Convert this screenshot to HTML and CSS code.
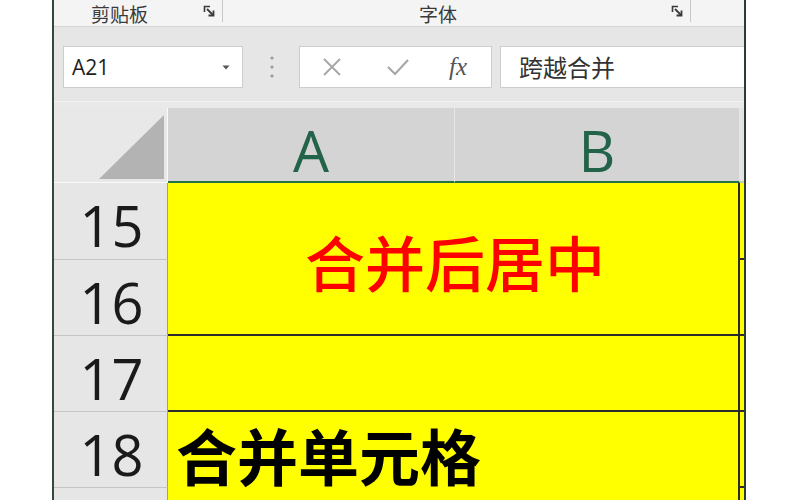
FILE: index.html
```html
<!DOCTYPE html>
<html lang="zh-CN">
<head>
<meta charset="utf-8">
<title>合并单元格</title>
<link rel="stylesheet" href="styles.css">
</head>
<body>
<div class="window">
  <div class="ribbon">
    <div class="group g1">
      <span class="glabel">剪贴板</span>
      <svg class="launcher" width="12" height="12" viewBox="0 0 12 12"><path d="M1.5 7V1.5H7" fill="none" stroke="#3a3a3a" stroke-width="1.6"/><path d="M4 4L10 10" stroke="#3a3a3a" stroke-width="1.8"/><path d="M10.5 5.5V10.5H5.5" fill="none" stroke="#3a3a3a" stroke-width="1.8"/></svg>
    </div>
    <div class="group g2">
      <span class="glabel">字体</span>
      <svg class="launcher" width="12" height="12" viewBox="0 0 12 12"><path d="M1.5 7V1.5H7" fill="none" stroke="#3a3a3a" stroke-width="1.6"/><path d="M4 4L10 10" stroke="#3a3a3a" stroke-width="1.8"/><path d="M10.5 5.5V10.5H5.5" fill="none" stroke="#3a3a3a" stroke-width="1.8"/></svg>
    </div>
  </div>
  <div class="fbar">
    <div class="namebox">
      <span class="nbtext">A21</span>
      <svg class="dd" width="8" height="5" viewBox="0 0 8 5"><path d="M0.5 0.5H7.5L4 4.5Z" fill="#555"/></svg>
    </div>
    <div class="grip">
      <svg width="4" height="24" viewBox="0 0 4 24"><circle cx="2" cy="3" r="1.6" fill="#9a9a9a"/><circle cx="2" cy="12" r="1.6" fill="#9a9a9a"/><circle cx="2" cy="21" r="1.6" fill="#9a9a9a"/></svg>
    </div>
    <div class="fbtns">
      <svg class="fx-x" width="20" height="20" viewBox="0 0 20 20"><path d="M2 2L18 18M18 2L2 18" stroke="#a8a8a8" stroke-width="2"/></svg>
      <svg class="fx-ok" width="24" height="20" viewBox="0 0 24 20"><path d="M2 10L9 17L22 3" fill="none" stroke="#a8a8a8" stroke-width="2.2"/></svg>
      <span class="fx">fx</span>
    </div>
    <div class="finput">跨越合并</div>
  </div>
  <div class="sheetwrap">
    <div class="sheet">
      <div class="corner">
        <svg width="113" height="74" viewBox="0 0 113 74"><polygon points="45,71 110,71 110,7" fill="#b3b3b3"/></svg>
      </div>
      <div class="colh">A</div>
      <div class="colh">B</div>
      <div class="colh colc"></div>

      <div class="rowh r15">15</div>
      <div class="rowh r16">16</div>
      <div class="rowh r17">17</div>
      <div class="rowh r18">18</div>
      <div class="rowh r19"></div>

      <div class="cell m1">合并后居中</div>
      <div class="cell m2"></div>
      <div class="cell m3">合并单元格</div>

      <div class="cc c15"></div>
      <div class="cc c16"></div>
      <div class="cc c17"></div>
      <div class="cc c18"></div>
      <div class="cc c19"></div>
    </div>
  </div>
</div>
</body>
</html>
```

FILE: styles.css
```css
* { box-sizing: border-box; }
html, body {
  margin: 0;
  padding: 0;
  width: 800px;
  height: 500px;
  overflow: hidden;
  background: #ffffff;
  font-family: "Noto Sans CJK SC", "Noto Sans", sans-serif;
}
.window {
  margin-left: 52px;
  width: 694px;
  height: 500px;
  border-left: 2px solid #34493a;
  border-right: 2px solid #2f3a33;
  background: #e6e6e6;
  display: flex;
  flex-direction: column;
  overflow: hidden;
}

/* ribbon group labels */
.ribbon {
  height: 27px;
  flex: none;
  background: #f4f4f4;
  border-bottom: 1px solid #d4d4d4;
  display: flex;
}
.group {
  display: flex;
  align-items: flex-start;
  height: 22px;
  border-right: 1px solid #c8c8c8;
  padding-right: 7px;
}
.g1 { width: 169px; padding-left: 37px; }
.g2 { width: 468px; padding-left: 196px; }
.glabel {
  font-size: 19px;
  line-height: normal;
  color: #3a3a3a;
}
.launcher { margin-left: auto; margin-top: 5px; }

/* formula bar */
.fbar {
  height: 74px;
  flex: none;
  display: flex;
  align-items: flex-start;
  padding-top: 19px;
  padding-left: 9px;
  background: #e6e6e6;
}
.namebox {
  width: 180px;
  height: 42px;
  background: #ffffff;
  border: 1px solid #cdcdcd;
  display: flex;
  align-items: center;
  padding-left: 8px;
  padding-right: 12px;
}
.nbtext {
  font-family: "Open Sans", "Liberation Sans", sans-serif;
  font-size: 21px;
  color: #1e1e1e;
}
.dd { margin-left: auto; }
.grip {
  width: 56px;
  height: 42px;
  display: flex;
  align-items: center;
  justify-content: center;
  padding-left: 1px;
}
.fbtns {
  width: 193px;
  height: 42px;
  background: #ffffff;
  border: 1px solid #cdcdcd;
  display: flex;
  align-items: center;
  padding-left: 22px;
}
.fx-ok { margin-left: 44px; }
.fx {
  margin-left: 39px;
  font-family: "Liberation Serif", "DejaVu Serif", serif;
  font-style: italic;
  font-size: 25px;
  color: #555555;
}
.finput {
  margin-left: 8px;
  flex: 1;
  height: 42px;
  background: #ffffff;
  border: 1px solid #cdcdcd;
  border-right: none;
  padding-left: 18px;
  font-size: 24px;
  line-height: 40px;
  color: #333333;
}

/* sheet */
.sheetwrap {
  flex: 1;
  border-top: 1px solid #f2f2f2;
  padding-top: 6px;
  background: #e9e9e9;
}
.sheet {
  display: grid;
  grid-template-columns: 114px 287px 285px 1fr;
  grid-template-rows: 75px 77px 76px 76px 76px 60px;
  height: 400px;
}
.corner {
  background: #e8e8e8;
  border-right: 1px solid #fafafa;
  border-bottom: 1px solid #fafafa;
}
.corner svg { display: block; }
.colh {
  background: #d4d4d4;
  border-right: 1px solid #e6e6e6;
  border-bottom: 2px solid #217346;
  display: flex;
  justify-content: center;
  align-items: center;
  padding-top: 10px;
  font-family: "Open Sans", "Liberation Sans", sans-serif;
  font-size: 57px;
  color: #23634a;
}
.colc {
  background: #e3e3e3;
  border-right: none;
  border-bottom: 2px solid #c8c8c8;
}
.rowh {
  grid-column: 1;
  background: #e6e6e6;
  border-bottom: 1px solid #c4c4c4;
  border-right: 1px solid #9c9c9c;
  display: flex;
  justify-content: center;
  align-items: center;
  padding-top: 8px;
  padding-left: 2px;
  font-family: "Open Sans", "Liberation Sans", sans-serif;
  font-size: 56px;
  color: #1a1a1a;
}
.r15 { grid-row: 2; }
.r16 { grid-row: 3; }
.r17 { grid-row: 4; }
.r18 { grid-row: 5; }
.r19 { grid-row: 6; }

.cell {
  background: #ffff00;
  border-right: 2px solid #2b2b2b;
  border-bottom: 2px solid #2b2b2b;
  grid-column: 2 / 4;
}
.m1 {
  grid-row: 2 / 4;
  display: flex;
  justify-content: center;
  align-items: center;
  padding-top: 4px;
  padding-left: 4px;
  font-size: 60px;
  font-weight: 500;
  color: #ff0000;
}
.m2 { grid-row: 4; }
.m3 {
  grid-row: 5 / 7;
  border-bottom: none;
  padding-left: 8px;
  padding-top: 12px;
  font-size: 61px;
  line-height: 61px;
  font-weight: 700;
  color: #000000;
}
.cc {
  grid-column: 4;
  background: #ffff00;
  border-bottom: 2px solid #2b2b2b;
}
.c15 { grid-row: 2; }
.c16 { grid-row: 3; }
.c17 { grid-row: 4; }
.c18 { grid-row: 5; }
.c19 { grid-row: 6; }
```
